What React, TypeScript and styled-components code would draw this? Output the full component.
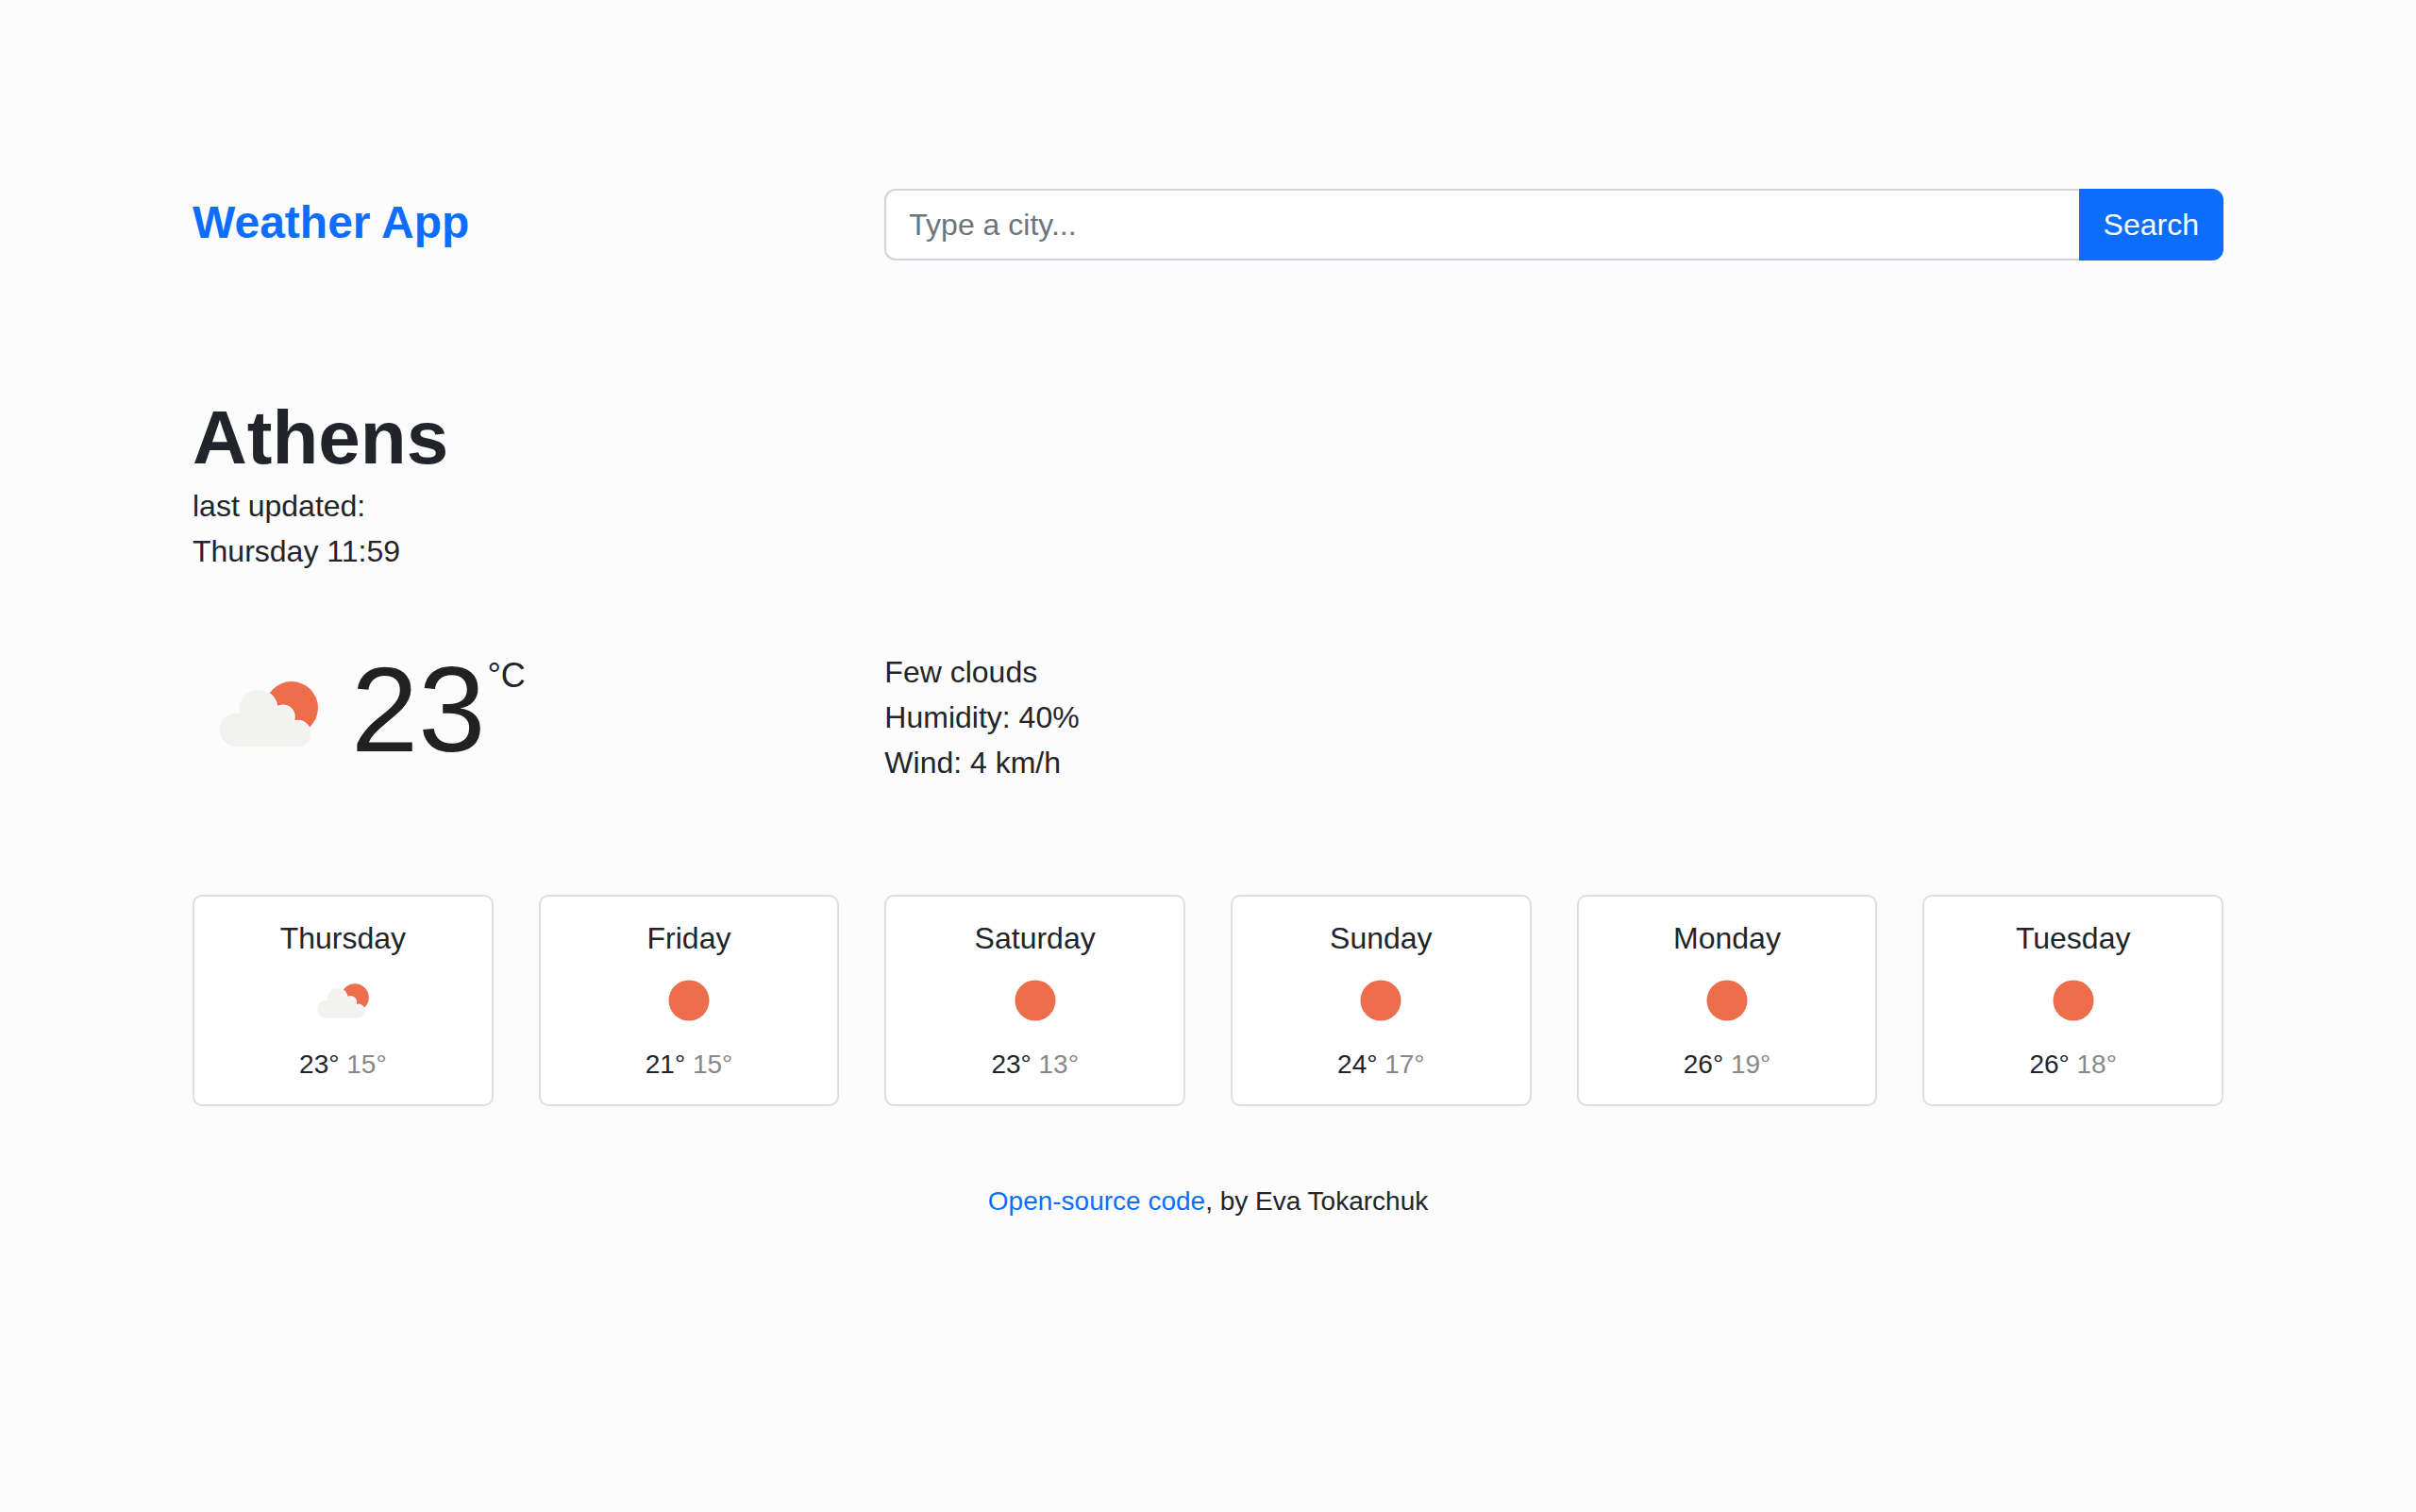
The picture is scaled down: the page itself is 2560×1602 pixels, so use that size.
import React from "react";
import styled, { createGlobalStyle } from "styled-components";

const GlobalStyle = createGlobalStyle`
  *, *::before, *::after { box-sizing: border-box; }
  body {
    margin: 0;
    background: #fcfcfc;
    color: #212529;
    font-family: "Liberation Sans", Arial, Helvetica, sans-serif;
    font-size: 32px;
    line-height: 48px;
  }
`;

const Page = styled.div`
  max-width: 2200px;
  margin: 0 auto;
  padding: 200px 24px 80px;
`;

const Row = styled.div`
  display: grid;
  grid-template-columns: repeat(3, minmax(0, 1fr));
  column-gap: 48px;
  align-items: start;
`;

const Title = styled.h1`
  margin: 0;
  color: #0d6efd;
  font-size: 48px;
  line-height: 72px;
`;

const SearchForm = styled.form`
  grid-column: span 2;
  display: flex;
`;

const SearchInput = styled.input`
  flex: 1;
  min-width: 0;
  margin: 0;
  padding: 12px 24px;
  border: 2px solid #ced4da;
  border-right: 0;
  border-radius: 12px 0 0 12px;
  background: #fff;
  color: inherit;
  font: inherit;
  &::placeholder {
    color: #6c757d;
    opacity: 1;
  }
`;

const SearchButton = styled.button`
  padding: 12px 24px;
  border: 2px solid #0d6efd;
  border-radius: 0 12px 12px 0;
  background: #0d6efd;
  color: #fff;
  font: inherit;
  cursor: pointer;
`;

const Overview = styled.section`
  margin-top: 140px;
`;

const City = styled.h2`
  margin: 0;
  font-size: 80px;
  line-height: 96px;
`;

const PlainList = styled.ul`
  margin: 0;
  padding: 0;
  list-style: none;
`;

const Conditions = styled(Row)`
  margin-top: 80px;
`;

const Current = styled.div`
  display: flex;
  align-items: flex-start;
`;

const CurrentIcon = styled.svg`
  width: 160px;
  height: 136px;
  margin-right: 8px;
`;

const Temperature = styled.strong`
  margin-right: 2px;
  color: #212121;
  font-size: 128px;
  font-weight: 400;
  line-height: 128px;
`;

const Unit = styled.span`
  font-size: 36px;
  line-height: 56px;
`;

const Forecast = styled.section`
  display: grid;
  grid-template-columns: repeat(6, minmax(0, 1fr));
  gap: 48px;
  margin-top: 116px;
`;

const DayCard = styled.article`
  display: flex;
  flex-direction: column;
  align-items: center;
  padding: 20px;
  border: 2px solid #dbdfe4;
  border-radius: 10px;
  background: #fff;
`;

const DayName = styled.h3`
  margin: 0;
  font-size: 32px;
  font-weight: 400;
`;

const DayIcon = styled.svg`
  width: 84px;
  height: 84px;
`;

const DayTemps = styled.div`
  margin-top: 4px;
  font-size: 28px;
  line-height: 44px;
`;

const Low = styled.span`
  color: #888;
`;

const Footer = styled.footer`
  margin-top: 80px;
  font-size: 28px;
  line-height: 42px;
  text-align: center;
`;

const SourceLink = styled.a`
  color: #0d6efd;
  text-decoration: none;
`;

type Sky = "clear" | "clouds";

const cloudShapes = (
  <>
    <circle cx="139" cy="292" r="53" />
    <circle cx="208" cy="225" r="60" />
    <circle cx="288" cy="250" r="35" />
    <circle cx="334" cy="305" r="41" />
    <path d="M139 345V245H208L288 251L334 270V345Z" />
  </>
);

function FewClouds({ id }: { id: string }) {
  return (
    <>
      <clipPath id={id}>
        <circle cx="315" cy="222" r="84" />
      </clipPath>
      <g clipPath={`url(#${id})`}>
        <rect x="220" y="130" width="190" height="190" fill="#ec6e4c" />
        <g fill="#ee5f3a" stroke="#ee5f3a" strokeWidth="11">
          {cloudShapes}
        </g>
        <g fill="#fcfcfc" stroke="#fcfcfc" strokeWidth="7">
          {cloudShapes}
        </g>
      </g>
      <g fill="#f2f2f1">{cloudShapes}</g>
    </>
  );
}

const days: { name: string; sky: Sky; high: number; low: number }[] = [
  { name: "Thursday", sky: "clouds", high: 23, low: 15 },
  { name: "Friday", sky: "clear", high: 21, low: 15 },
  { name: "Saturday", sky: "clear", high: 23, low: 13 },
  { name: "Sunday", sky: "clear", high: 24, low: 17 },
  { name: "Monday", sky: "clear", high: 26, low: 19 },
  { name: "Tuesday", sky: "clear", high: 26, low: 18 },
];

export default function App() {
  return (
    <>
      <GlobalStyle />
      <Page>
        <Row as="header">
          <Title>Weather App</Title>
          <SearchForm onSubmit={(e) => e.preventDefault()}>
            <SearchInput type="text" aria-label="City" placeholder="Type a city..." />
            <SearchButton type="submit">Search</SearchButton>
          </SearchForm>
        </Row>
        <main>
          <Overview>
            <City>Athens</City>
            <PlainList>
              <li>last updated:</li>
              <li>Thursday 11:59</li>
            </PlainList>
          </Overview>
          <Conditions>
            <Current>
              <CurrentIcon viewBox="0 36 480 408" aria-hidden="true">
                <FewClouds id="sun-now" />
              </CurrentIcon>
              <Temperature>23</Temperature>
              <Unit>°C</Unit>
            </Current>
            <PlainList>
              <li>Few clouds</li>
              <li>Humidity: 40%</li>
              <li>Wind: 4 km/h</li>
            </PlainList>
          </Conditions>
          <Forecast>
            {days.map((day) => (
              <DayCard key={day.name}>
                <DayName>{day.name}</DayName>
                <DayIcon viewBox="0 0 480 480" aria-hidden="true">
                  {day.sky === "clouds" ? (
                    <FewClouds id={`sun-${day.name}`} />
                  ) : (
                    <circle cx="240" cy="240" r="123" fill="#ec6e4c" />
                  )}
                </DayIcon>
                <DayTemps>
                  {day.high}° <Low>{day.low}°</Low>
                </DayTemps>
              </DayCard>
            ))}
          </Forecast>
        </main>
        <Footer>
          <SourceLink href="#source">Open-source code</SourceLink>, by Eva Tokarchuk
        </Footer>
      </Page>
    </>
  );
}
